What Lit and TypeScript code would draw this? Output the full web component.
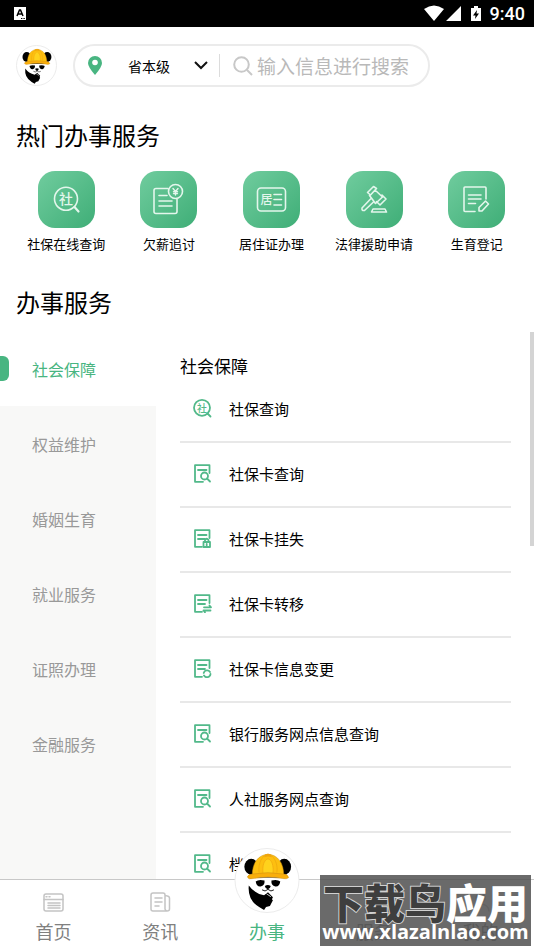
import { LitElement, html, css, svg } from "lit";
import { customElement, property } from "lit/decorators.js";
import { classMap } from "lit/directives/class-map.js";

const panda = svg`
  <ellipse cx="16" cy="18" rx="7" ry="8" fill="#000"/>
  <ellipse cx="49.500" cy="18" rx="7" ry="8" fill="#000"/>
  <path d="M14 26h38l-3 3H17z" fill="#000"/>
  <path d="M17 27C17 14 23 6 33 5.300 43 6 49 14 49 27z" fill="#fdbf10" stroke="#c98c14" stroke-width=".5"/>
  <path d="M28 25C27 17 29 11 33 10 37 11 39 17 38 25z" fill="#ffd21c" stroke="#f0a50f" stroke-width=".7"/>
  <path d="M24 24C23 17 25 11 29 7M42 24C43 17 41 11 37 7" fill="none" stroke="#efa80d" stroke-width=".8"/>
  <path d="M30 5.500q3-1.500 6 0l1 3q-4-2-8 0z" fill="#f0a50f"/>
  <path d="M12 28.500Q13 25.500 17 25.500q16-3 32 0 4 0 5 3.500-2 2-6 1-15-3-30 0-5 1.200-6-1.500z" fill="#f9ae0b" stroke="#c98c14" stroke-width=".5"/>
  <path d="M20.500 33q3-2.500 9-1 .5 5-4 6-4 .5-5-5zM45.500 33q-3-2.500-9-1-.5 5 4 6 4 .5 5-5z" fill="#000"/>
  <path d="M29.800 37.500q3-2 6 0-.5 3-3 3.500-2.500-.5-3-3.500z" fill="#000"/>
  <path d="M27 41.500q3 2.500 6-.5 3 3 6 .5" fill="none" stroke="#000" stroke-width=".9"/>
  <path d="M13.500 37Q19 45 29 47l4-3 5 5-1 2 1 1-3 6-4 1-2 3-5-3q-12-7-10.500-22z" fill="#000"/>
  <path d="M31.500 45.500l4.500 3" stroke="#fff" stroke-width=".8"/>`;

const page = svg`<path d="M11 18.800H3V2.200h14.500V10M6 7h8.500"/>`;
const pageLines = svg`<path d="M3 2.200h14.500V10M3 2.200v16.600h7M6 7h8.500M6 11h7"/>`;
const glyphs: Record<string, unknown> = {
  social: svg`<circle cx="10" cy="9.800" r="8"/><path d="M15.500 15.500l3 3"/><text class="mini" x="10" y="13.500">社</text>`,
  search: svg`${page}<circle cx="12.500" cy="13" r="3.500"/><path d="M15 15.500l3 3"/>`,
  lock: svg`${pageLines}<path d="M11.500 14h6.500v5h-6.500zM13 14v-2q1.700-2.500 3.500 0v2M14.700 16v1.500"/>`,
  move: svg`${pageLines}<path d="M12 14.300h7M17.500 12.500l1.500 1.800M18.500 17.500h-7M13 19.300l-1.500-1.800"/>`,
  change: svg`${pageLines}<path d="M11.700 15a3.500 3.500 0 0 1 6.300-1M18.500 16a3.500 3.500 0 0 1-6.500 1.500"/>`,
};

const tiles: Record<string, unknown> = {
  social: svg`<circle cx="28" cy="27.700" r="11.500"/><path d="M36.500 36l4 4.500" stroke-width="2.200"/><text class="big" x="28" y="33">社</text>`,
  wage: svg`<path d="M28 17.500H16q-2 0-2 2v21q0 2 2 2h19q2 0 2-2V28"/><circle cx="35.500" cy="20.500" r="7"/><path d="M19 24.500h8M19 30h13M19 35h13"/><path d="M33 17.500l2.500 3 2.500-3M35.500 20v4M33.500 20.800h4M33.500 22.600h4" stroke-width="1.400"/>`,
  permit: svg`<rect x="14.500" y="17" width="28" height="23" rx="3.500"/><path d="M31 23.500h7.500M31 28.500h7.500M31 34h7.500"/><text class="big small" x="23.500" y="33">居</text>`,
  law: svg`<path d="M21.500 21.500l6-6 3 2-6 6.500zM36 24l4 4-6 6-3.500-3.500M29 19l7.500 7-7 6.500-6-8M24.500 28l-8.500 9q-.5 3 2.500 2.500l9-8.500"/><path d="M27 38h12l1.500 3h-15z"/>`,
  birth: svg`<path d="M38 28V17q0-1-1-1H17q-1 0-1 1v22.500q0 1 1 1h10M20.500 24H33M20.500 28H33M20.500 32.500h7M31 40v-3.500l6.500-6.500 3 3-6.500 7z"/>`,
};

const tabIcons: Record<string, unknown> = {
  home: svg`<rect x="1" y="2" width="19" height="17" rx="2"/><path d="M1 7.500h19M3 4.800h1M6 4.800h1M5 11h12M5 13.500h12M5 16h12"/>`,
  news: svg`<path d="M15 17V3q0-2-2-2H3Q1 1 1 3v14q0 2 2 2h14q2.500 0 2.500-2V6q0-2-4.500-2.500M15 17q.5 2 2 2M5 6h7M5 10h7M5 14h4"/>`,
  serve: svg`<rect x="2" y="2" width="17" height="17" rx="2"/><path d="M6 7h9M6 11h9"/>`,
  mine: svg`<circle cx="10.500" cy="6" r="4.500"/><path d="M2 19q1-7 8.500-7t8.500 7"/>`,
};

@customElement("panda-badge")
class PandaBadge extends LitElement {
  static styles = css`
    :host { display: block; background: #fff; border: 1px solid #ececec; border-radius: 50%; box-sizing: border-box; }
    svg { display: block; width: 100%; }
  `;
  render() {
    return html`<svg viewBox="0 0 64 64" aria-hidden="true">${panda}</svg>`;
  }
}

@customElement("hot-service")
class HotService extends LitElement {
  @property() icon = "";
  @property() label = "";
  static styles = css`
    :host { display: block; }
    .item { display: flex; flex-direction: column; align-items: center; gap: 6px; width: 100%; padding: 0; border: 0; background: none; font: inherit; color: #000; }
    .tile { width: 57px; height: 57px; border-radius: 17px; background: linear-gradient(135deg, #70cc9e, #3fae77); }
    .tile svg { display: block; fill: none; stroke: #e3f6ec; stroke-width: 1.6; stroke-linejoin: round; stroke-linecap: round; }
    .big { font-size: 14px; text-anchor: middle; fill: #e3f6ec; stroke: none; font-weight: 500; }
    .small { font-size: 12px; }
    .label { font-size: 13px; line-height: 20px; white-space: nowrap; }
  `;
  render() {
    return html`<button class="item">
      <span class="tile"><svg width="57" height="57" viewBox="0 0 57 57" aria-hidden="true">${tiles[this.icon]}</svg></span>
      <span class="label">${this.label}</span>
    </button>`;
  }
}

@customElement("app-root")
class AppRoot extends LitElement {
  private hot = [
    ["social", "社保在线查询"], ["wage", "欠薪追讨"], ["permit", "居住证办理"], ["law", "法律援助申请"], ["birth", "生育登记"],
  ];
  private categories = ["社会保障", "权益维护", "婚姻生育", "就业服务", "证照办理", "金融服务"];
  private services = [
    ["social", "社保查询"], ["search", "社保卡查询"], ["lock", "社保卡挂失"], ["move", "社保卡转移"],
    ["change", "社保卡信息变更"], ["search", "银行服务网点信息查询"], ["search", "人社服务网点查询"], ["search", "档案查询"],
  ];
  private tabs = [["home", "首页"], ["news", "资讯"], ["panda", "办事"], ["serve", "服务"], ["mine", "我的"]];

  static styles = css`
    :host { display: flex; flex-direction: column; position: relative; height: 100vh; overflow: hidden; background: #fff; color: #000;
      font-family: "Noto Sans CJK SC", "Liberation Sans", sans-serif; }
    * { box-sizing: border-box; }
    button, input, select { font-family: inherit; }
    .status { flex: none; display: flex; align-items: center; height: 27px; padding: 0 9px 0 14px; background: #000; color: #fff; }
    .ime { margin-right: auto; }
    .clock { margin-left: 8px; font: 500 18px/27px Roboto, sans-serif; }
    .status svg { display: block; }
    .head { flex: none; display: flex; align-items: center; gap: 16px; padding: 17px 104px 0 16px; }
    .avatar { flex: none; width: 41px; }
    .search { flex: 1; min-width: 0; display: flex; align-items: center; height: 43px; padding: 0 12px 0 13px; border: 2px solid #ebebeb; border-radius: 22px; }
    .region { flex: none; display: grid; grid-template-columns: 14px 84px 14px; column-gap: 4px; align-items: center; }
    .region svg, .region select { grid-row: 1; }
    .region select { grid-column: 2 / 4; appearance: none; width: 100%; padding: 0 0 0 22px; border: 0; background: none; color: #000; font-size: 14px; line-height: 20px; }
    .chevron { grid-column: 3; pointer-events: none; }
    .rule { flex: none; width: 1px; height: 23px; margin: 0 13px 0 11px; background: #dcdcdc; }
    .glass { flex: none; margin-right: 4px; }
    .query { flex: 1; min-width: 0; padding: 0; border: 0; outline: 0; background: none; font-size: 19px; line-height: 28px; }
    .query::placeholder { color: #b9b9b9; opacity: 1; }
    h1, h2, h3 { margin: 0; font-weight: 400; }
    h1, h2 { flex: none; padding: 0 16px; font-size: 24px; line-height: 36px; }
    h1 { margin-top: 30px; }
    .hot { flex: none; display: grid; grid-template-columns: repeat(5, 1fr); padding: 18px 6px 30px 15px; }
    .body { flex: 1; min-height: 0; position: relative; display: flex; margin-top: 11px; overflow: hidden; }
    .side { flex: none; width: 156px; background: #f8f8f7; }
    .cat { display: flex; align-items: center; width: 100%; height: 75px; padding: 0; border: 0; background: none; color: #999; font-size: 16px; }
    .cat::before { content: ""; width: 9px; height: 25px; margin-right: 23px; border-radius: 0 6px 6px 0; }
    .cat.on { background: #fff; color: #48b581; }
    .cat.on::before { background: #48b581; }
    .list { flex: 1; min-width: 0; padding: 23px 23px 0 24px; }
    h3 { font-size: 17px; line-height: 24px; }
    .row { display: flex; align-items: center; gap: 17px; width: 100%; height: 65px; padding: 0 12px 3px; border: 0; border-bottom: 2px solid #e8e8e8; background: none; color: #000; font-size: 15px; text-align: left; }
    .row svg { flex: none; fill: none; stroke: #52b98a; stroke-width: 1.8; stroke-linejoin: round; stroke-linecap: round; }
    .mini { font-size: 10px; text-anchor: middle; fill: #52b98a; stroke: none; font-weight: 500; }
    .thumb { position: absolute; top: 1px; right: 0; width: 4px; height: 39%; background: #d4d4d4; }
    .tabs { flex: none; display: grid; grid-template-columns: repeat(5, 1fr); height: 71px; border-top: 1px solid #c8c8c8; background: #fff; }
    .tab { position: relative; display: flex; flex-direction: column; align-items: center; justify-content: flex-end; gap: 5px; padding: 0 0 5px; border: 0; background: none; color: #808080; font-size: 18px; line-height: 28px; }
    .tab svg { fill: none; stroke: #c4c4c4; stroke-width: 1.5; stroke-linecap: round; }
    .tab.on { color: #48b581; }
    .fab { position: absolute; top: -32px; left: 50%; width: 65px; transform: translateX(-50%); }
    .mark { position: absolute; right: 3px; bottom: 4px; width: 211px; height: 71px; display: flex; flex-direction: column; align-items: center; background: rgba(82, 82, 82, 0.86); color: #fff; white-space: nowrap; }
    .brand { padding-top: 2px; font-size: 41px; line-height: 48px; font-weight: 900; }
    .dark { color: #3e3e3e; -webkit-text-stroke: 2px #d0d0d0; paint-order: stroke fill; }
    .site { margin-top: -3px; font: 700 20px/20px "Open Sans", sans-serif; }
  `;

  render() {
    return html`
      <div class="status">
        <svg class="ime" width="12" height="13" viewBox="0 0 12 13" aria-hidden="true"><path d="M0 0h12v13H0z" fill="#fff"/><path d="M3 9l2.500-6h1L9 9M4 7h4" fill="none" stroke="#000" stroke-width="1.500"/><path d="M7 11.500h4" stroke="#000" stroke-dasharray="1 .6"/></svg>
        <svg width="58" height="17" viewBox="0 0 58 17" fill="#fff" aria-hidden="true"><path d="M0 4q10-7 20 0L10 16zM37 1v15H22zM47 3h3V1h4v2h3v13H47z"/><path d="M53 5l-4 5.500h2.500L51 14l4-5.500h-2.500z" fill="#000"/></svg>
        <span class="clock">9:40</span>
      </div>
      <header class="head">
        <panda-badge class="avatar"></panda-badge>
        <form class="search">
          <div class="region">
            <svg width="14" height="19" viewBox="0 0 14 19" aria-hidden="true"><path d="M7 19Q0 11 0 7a7 7 0 0 1 14 0q0 4-7 12z" fill="#48b581"/><circle cx="7" cy="6.500" r="2.800" fill="#fff"/></svg>
            <select aria-label="地区"><option>省本级</option></select>
            <svg class="chevron" width="14" height="9" viewBox="0 0 14 9" aria-hidden="true"><path d="M1 1l6 6 6-6" fill="none" stroke="#111" stroke-width="2"/></svg>
          </div>
          <span class="rule"></span>
          <svg class="glass" width="20" height="20" viewBox="0 0 20 20" fill="none" stroke="#c8c8c8" stroke-width="2" aria-hidden="true"><circle cx="8.500" cy="8.500" r="7.300"/><path d="M14 14l5 5"/></svg>
          <input class="query" type="text" aria-label="搜索" placeholder="输入信息进行搜索">
        </form>
      </header>
      <h1>热门办事服务</h1>
      <section class="hot">${this.hot.map(([icon, label]) => html`<hot-service icon=${icon} label=${label}></hot-service>`)}</section>
      <h2>办事服务</h2>
      <main class="body">
        <nav class="side">${this.categories.map((c, i) => html`<button class=${classMap({ cat: true, on: i === 0 })}>${c}</button>`)}</nav>
        <section class="list">
          <h3>社会保障</h3>
          ${this.services.map(([icon, label]) => html`<button class="row"><svg width="20" height="20" viewBox="0 0 20 20" aria-hidden="true">${glyphs[icon]}</svg>${label}</button>`)}
        </section>
        <span class="thumb"></span>
      </main>
      <nav class="tabs">
        ${this.tabs.map(([icon, label]) => html`<button class=${classMap({ tab: true, on: icon === "panda" })}>
          ${icon === "panda" ? html`<panda-badge class="fab"></panda-badge>` : html`<svg width="21" height="20" viewBox="0 0 21 20" aria-hidden="true">${tabIcons[icon]}</svg>`}
          <span>${label}</span>
        </button>`)}
      </nav>
      <aside class="mark">
        <span class="brand"><span class="dark">下载鸟</span>应用</span>
        <span class="site">www.xlazalnlao.com</span>
      </aside>`;
  }
}
